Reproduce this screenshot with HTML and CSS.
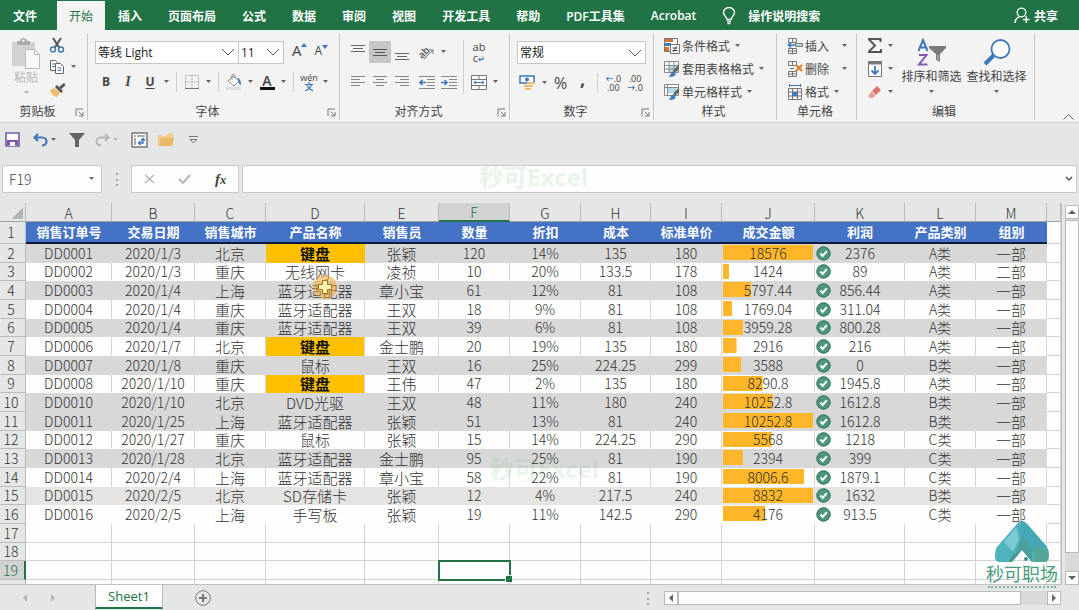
FILE: index.html
```
<!DOCTYPE html>
<html lang="zh-CN">

<head>
    <meta charset="UTF-8">
    <meta name="viewport" content="width=device-width, initial-scale=1.0">
    <title>Sheet1</title>
    <link rel="stylesheet" href="styles.css">
</head>

<body>
    <!-- shared symbols -->
    <svg class="symbols" aria-hidden="true">
        <symbol id="caret" viewBox="0 0 7 4"><path d="M1 0h5L3.5 3z" fill="currentColor" /></symbol>
        <symbol id="chevron" viewBox="0 0 14 8"><path d="M1 1l6 6 6-6" fill="none" stroke="#555" /></symbol>
        <symbol id="launcher" viewBox="0 0 9 9">
            <path d="M1 8V1h7M3.500 3.500l4 4M8 4v4H4" fill="none" stroke="#777" />
        </symbol>
        <symbol id="check" viewBox="0 0 15 15">
            <circle cx="7.500" cy="7.500" r="7.200" fill="#4f9580" />
            <circle cx="7.500" cy="7.500" r="6.500" fill="none" stroke="#397a66" />
            <path d="M4.500 7.500l2.200 2.400L10.800 5.200" fill="none" stroke="#fff" stroke-width="2" />
        </symbol>
    </svg>

    <div class="app">
        <nav class="tabs">
            <button class="tab file">文件</button>
            <button class="tab active">开始</button>
            <button class="tab">插入</button>
            <button class="tab">页面布局</button>
            <button class="tab">公式</button>
            <button class="tab">数据</button>
            <button class="tab">审阅</button>
            <button class="tab">视图</button>
            <button class="tab">开发工具</button>
            <button class="tab">帮助</button>
            <button class="tab">PDF工具集</button>
            <button class="tab">Acrobat</button>
            <button class="tab tell">
                <svg width="14" height="18" viewBox="0 0 14 18" fill="none" stroke="#fff" stroke-width="1.300">
                    <path d="M5 12.500c0-2.500-3.500-3.500-3.500-7a5.500 5 0 0 1 11 0c0 3.500-3.500 4.500-3.500 7zM5 14.500h4M5.500 16.500h3" />
                </svg>
                操作说明搜索
            </button>
            <button class="tab share">
                <svg width="16" height="17" viewBox="0 0 16 17" fill="none" stroke="#fff" stroke-width="1.300">
                    <circle cx="7.500" cy="5.500" r="4.300" />
                    <path d="M1 16c0-3.500 2-5.500 5-6.500M9 12.500h6.500M12.200 9v7" />
                </svg>
                共享
            </button>
        </nav>

        <div class="ribbon">
            <section class="group">
                <div class="group-body clipboard">
                    <button class="big disabled">
                        <svg width="30" height="31" viewBox="0 0 30 31">
                            <path d="M1 4h23v24H1z" fill="#d2d2d2" />
                            <path d="M6 3h3c0-4 7-4 7 0h3v4H6z" fill="#aaa" />
                            <circle cx="12.500" cy="2.800" r="1.300" fill="#f3f3f3" />
                            <path d="M14.500 11.500h9l5 5v14h-14z" fill="#f8f8f8" stroke="#bcbcbc" />
                            <path d="M23.500 11.500v5h5" fill="none" stroke="#bcbcbc" />
                        </svg>
                        <span>粘贴</span>
                        <svg class="caret"><use href="#caret" /></svg>
                    </button>
                    <div class="stack">
                        <button class="ib" aria-label="剪切">
                            <svg width="16" height="16" viewBox="0 0 16 16" fill="none">
                                <path d="M4 1l6.500 10M12 1L5.500 11" stroke="#555" stroke-width="2" />
                                <circle cx="4" cy="12.500" r="2.500" stroke="#3f77bb" stroke-width="1.400" />
                                <circle cx="12" cy="12.500" r="2.500" stroke="#3f77bb" stroke-width="1.400" />
                            </svg>
                        </button>
                        <div class="line">
                            <button class="ib" aria-label="复制">
                                <svg width="16" height="14" viewBox="0 0 16 14" fill="#fff" stroke="#666">
                                    <path d="M1.500.5h5l2 2v8h-7z" />
                                    <path d="M6.500 3.500h5l3 3v7h-8z" />
                                    <path d="M3 4h3M3 6.500h3M8.500 8h4M8.500 10.500h4" stroke="#3f77bb" />
                                </svg>
                            </button>
                            <svg class="caret"><use href="#caret" /></svg>
                        </div>
                        <button class="ib" aria-label="格式刷">
                            <svg width="17" height="15" viewBox="0 0 17 15">
                                <path d="M1 8l5-2 5 5-3 4c-3 0-6-3-7-7z" fill="#e9bd6d" />
                                <path d="M6 5l2-2 6 6-2 2z" fill="#555" />
                                <path d="M10 5l5-4 1.500 2-4 4z" fill="#555" />
                            </svg>
                        </button>
                    </div>
                </div>
                <footer class="group-label"><span>剪贴板</span><button aria-label="剪贴板设置"><svg class="launcher"><use href="#launcher" /></svg></button></footer>
            </section>

            <section class="group">
                <div class="group-body rows">
                    <div class="line">
                        <div class="combo font-name">
                            <select aria-label="字体"><option>等线 Light</option></select>
                            <svg class="chevron"><use href="#chevron" /></svg>
                        </div>
                        <div class="combo font-size">
                            <select aria-label="字号"><option>11</option></select>
                            <svg class="chevron"><use href="#chevron" /></svg>
                        </div>
                        <button class="ib grow">A<svg width="6" height="4" viewBox="0 0 6 4"><path d="M0 4h6L3 0z" fill="#3f77bb" /></svg></button>
                        <button class="ib shrink">A<svg width="6" height="4" viewBox="0 0 6 4"><path d="M0 0h6L3 4z" fill="#3f77bb" /></svg></button>
                    </div>
                    <div class="line">
                        <button class="ib bold">B</button>
                        <button class="ib italic">I</button>
                        <button class="ib underline">U</button>
                        <svg class="caret"><use href="#caret" /></svg>
                        <i class="vsep"></i>
                        <button class="ib" aria-label="边框">
                            <svg width="14" height="14" viewBox="0 0 14 14" fill="none" stroke="#aaa">
                                <path d="M.5.5h13v13H.5zM7 0v14M0 7h14" stroke-dasharray="2 1" />
                                <path d="M0 13.500h14" stroke="#777" />
                            </svg>
                        </button>
                        <svg class="caret"><use href="#caret" /></svg>
                        <i class="vsep"></i>
                        <button class="ib" aria-label="填充颜色">
                            <svg width="17" height="16" viewBox="0 0 17 16">
                                <path d="M0 13h15v3H0z" fill="#ddd" />
                                <path d="M2 7l5-5 6 5-5 5z" fill="#fff" stroke="#888" />
                                <path d="M6 6V1.500c0-1.500 3-1.500 3 0V4" fill="none" stroke="#888" />
                                <path d="M11 4c3 0 4 3 4 7-2-1-3-2-2-4z" fill="#3f77bb" />
                            </svg>
                        </button>
                        <svg class="caret"><use href="#caret" /></svg>
                        <button class="ib font-color"><span>A</span></button>
                        <svg class="caret"><use href="#caret" /></svg>
                        <i class="vsep"></i>
                        <button class="ib phonetic"><span>wén</span><b>文</b></button>
                        <svg class="caret"><use href="#caret" /></svg>
                    </div>
                </div>
                <footer class="group-label"><span>字体</span><button aria-label="字体设置"><svg class="launcher"><use href="#launcher" /></svg></button></footer>
            </section>

            <section class="group">
                <div class="group-body align">
                    <div class="rows">
                        <div class="line">
                            <button class="ib" aria-label="顶端对齐"><svg width="14" height="18" viewBox="0 0 14 18" stroke="#666"><path d="M0 2.500h14M2 5.500h10M0 8.500h14" /></svg></button>
                            <button class="ib pressed" aria-label="垂直居中"><svg width="14" height="18" viewBox="0 0 14 18" stroke="#555"><path d="M0 6.500h14M2 9.500h10M0 12.500h14" /></svg></button>
                            <button class="ib" aria-label="底端对齐"><svg width="14" height="18" viewBox="0 0 14 18" stroke="#666"><path d="M0 10.500h14M2 13.500h10M0 16.500h14" /></svg></button>
                            <button class="ib gap-left" aria-label="方向">
                                <svg width="18" height="17" viewBox="0 0 18 17" overflow="visible">
                                    <text x="0" y="12" class="icon-ab" transform="rotate(-45 6 9)">ab</text>
                                    <path d="M6 15L15 6M11 6h4v4" fill="none" stroke="#777" />
                                </svg>
                            </button>
                            <svg class="caret"><use href="#caret" /></svg>
                        </div>
                        <div class="line">
                            <button class="ib" aria-label="左对齐"><svg width="14" height="12" viewBox="0 0 14 12" stroke="#888"><path d="M0 .5h14M0 3.500h9M0 6.500h14M0 9.500h9" /></svg></button>
                            <button class="ib" aria-label="居中"><svg width="14" height="12" viewBox="0 0 14 12" stroke="#888"><path d="M0 .5h14M3 3.500h8M0 6.500h14M3 9.500h8" /></svg></button>
                            <button class="ib" aria-label="右对齐"><svg width="14" height="12" viewBox="0 0 14 12" stroke="#888"><path d="M0 .5h14M5 3.500h9M0 6.500h14M5 9.500h9" /></svg></button>
                            <button class="ib gap-left" aria-label="减少缩进">
                                <svg width="16" height="13" viewBox="0 0 16 13" stroke="#888" fill="none">
                                    <path d="M0 .5h16M8 3.500h8M8 6.500h8M8 9.500h8M0 12.500h16" />
                                    <path d="M7 6.500H1M3.500 4L1 6.500 3.500 9" stroke="#3f77bb" stroke-width="1.600" />
                                </svg>
                            </button>
                            <button class="ib" aria-label="增加缩进">
                                <svg width="16" height="13" viewBox="0 0 16 13" stroke="#888" fill="none">
                                    <path d="M0 .5h16M8 3.500h8M8 6.500h8M8 9.500h8M0 12.500h16" />
                                    <path d="M0 6.500h6M3.500 4L6 6.500 3.500 9" stroke="#3f77bb" stroke-width="1.600" />
                                </svg>
                            </button>
                        </div>
                    </div>
                    <i class="vsep tall"></i>
                    <div class="rows">
                        <button class="ib wrap"><span>ab</span><span>c<em>↵</em></span></button>
                        <div class="line">
                            <button class="ib" aria-label="合并后居中">
                                <svg width="16" height="15" viewBox="0 0 16 15" fill="#fff" stroke="#777">
                                    <path d="M.5.5h15v14H.5zM0 4.500h16M0 10.500h16M8 0v4M8 11v4" />
                                    <path d="M3 7.500h10M5 6L3 7.500 5 9M11 6l2 1.500L11 9" stroke="#3f77bb" fill="none" />
                                </svg>
                            </button>
                            <svg class="caret"><use href="#caret" /></svg>
                        </div>
                    </div>
                </div>
                <footer class="group-label"><span>对齐方式</span><button aria-label="对齐设置"><svg class="launcher"><use href="#launcher" /></svg></button></footer>
            </section>

            <section class="group">
                <div class="group-body rows">
                    <div class="combo">
                        <select aria-label="数字格式"><option>常规</option></select>
                        <svg class="chevron"><use href="#chevron" /></svg>
                    </div>
                    <div class="line">
                        <button class="ib" aria-label="会计数字格式">
                            <svg width="17" height="16" viewBox="0 0 17 16">
                                <path d="M1 1h14v7H1z" fill="#fff" stroke="#3f77bb" stroke-width="1.500" />
                                <circle cx="8" cy="4.500" r="2" fill="#3f77bb" />
                                <path d="M8 7h8v2H8zM5 10h9v2H5zM6 13h6v2H6z" fill="#e9bd6d" />
                            </svg>
                        </button>
                        <svg class="caret"><use href="#caret" /></svg>
                        <button class="ib percent">%</button>
                        <button class="ib comma">,</button>
                        <i class="vsep"></i>
                        <button class="ib decimal"><span><em>←</em>.0</span><span>.00</span></button>
                        <button class="ib decimal"><span>.00</span><span><em>→</em>.0</span></button>
                    </div>
                </div>
                <footer class="group-label"><span>数字</span><button aria-label="数字设置"><svg class="launcher"><use href="#launcher" /></svg></button></footer>
            </section>

            <section class="group">
                <div class="group-body list">
                    <button class="item">
                        <svg width="16" height="16" viewBox="0 0 16 16">
                            <path d="M.5.5h13v13H.5z" fill="#fff" stroke="#777" />
                            <path d="M1 1h8v3H1z" fill="#d9703a" /><path d="M1 5h6v3H1z" fill="#3f77bb" /><path d="M1 9h4v4H1z" fill="#d9703a" />
                            <path d="M6.500 6.500h9v9h-9z" fill="#fff" stroke="#777" />
                            <path d="M8.500 10h5M8.500 12.500h5M12.500 8.500l-3 5.500" stroke="#444" />
                        </svg>
                        条件格式<svg class="caret"><use href="#caret" /></svg>
                    </button>
                    <button class="item">
                        <svg width="16" height="16" viewBox="0 0 16 16">
                            <path d="M.5.5h14v11H.5z" fill="#fff" stroke="#888" />
                            <path d="M5 5h9v6H5z" fill="#b5dbe6" /><path d="M0 4.500h15M0 8h15M5 0v12M10 0v12" stroke="#888" />
                            <path d="M15 3v5l-4 4-2-2z" fill="#666" /><path d="M4 15.500c3 0 2-4 5-5l3 3c-2 2.500-5 2.500-8 2z" fill="#3f77bb" />
                        </svg>
                        套用表格格式<svg class="caret"><use href="#caret" /></svg>
                    </button>
                    <button class="item">
                        <svg width="16" height="16" viewBox="0 0 16 16">
                            <path d="M.5.5h14v11H.5z" fill="#fff" stroke="#888" />
                            <path d="M4 4h8v5H4z" fill="#b5dbe6" /><path d="M0 3.500h15M3.500 0v12" stroke="#888" />
                            <path d="M15 3v5l-4 4-2-2z" fill="#666" /><path d="M4 15.500c3 0 2-4 5-5l3 3c-2 2.500-5 2.500-8 2z" fill="#3f77bb" />
                        </svg>
                        单元格样式<svg class="caret"><use href="#caret" /></svg>
                    </button>
                </div>
                <footer class="group-label"><span>样式</span></footer>
            </section>

            <section class="group">
                <div class="group-body list">
                    <button class="item spread">
                        <svg width="16" height="16" viewBox="0 0 16 16" fill="none" stroke="#777">
                            <path d="M1.500.5h8v4h-8zM5.500.5v4M1.500 10.500h8v5h-8zM5.500 10v6M1.500 13h8" />
                            <path d="M8.500 5.500h7v3h-7z" fill="#b5dbe6" />
                            <path d="M8 7H1M4 4.500L1.500 7 4 9.500" stroke="#3f77bb" stroke-width="1.700" />
                        </svg>
                        插入<svg class="caret"><use href="#caret" /></svg>
                    </button>
                    <button class="item spread">
                        <svg width="16" height="16" viewBox="0 0 16 16" fill="none" stroke="#777">
                            <path d="M1.500.5h8v4h-8zM5.500.5v4M1.500 10.500h8v5h-8zM5.500 10v6M1.500 13h8M3 7.500h4" />
                            <path d="M9 4l6 6M15 4l-6 6" stroke="#e07b28" stroke-width="2" />
                        </svg>
                        删除<svg class="caret"><use href="#caret" /></svg>
                    </button>
                    <button class="item">
                        <svg width="16" height="16" viewBox="0 0 16 16" fill="none" stroke="#777">
                            <path d="M1.500 4.500h13v11h-13zM5.500 4v12M10.500 4v12M1 8h14M1 12h14" />
                            <path d="M5 8h5v4H5z" fill="#3f77bb" stroke="none" />
                            <path d="M2 1.500h11M2.500 0v3M13.500 0v3" stroke="#3f77bb" />
                        </svg>
                        格式<svg class="caret"><use href="#caret" /></svg>
                    </button>
                </div>
                <footer class="group-label"><span>单元格</span></footer>
            </section>

            <section class="group">
                <div class="group-body edit">
                    <div class="list">
                        <button class="item" aria-label="自动求和">
                            <svg width="16" height="15" viewBox="0 0 16 15"><path d="M1 1h12.500v3M1.500 1l6.500 6.500L1.500 14M1 14h13v-3" fill="none" stroke="#555" stroke-width="2" /></svg>
                            <svg class="caret"><use href="#caret" /></svg>
                        </button>
                        <button class="item" aria-label="填充">
                            <svg width="16" height="16" viewBox="0 0 16 16" fill="#fff" stroke="#777">
                                <path d="M1.500.5h13v15h-13z" /><path d="M1 2h14" stroke-width="3" />
                                <path d="M8 5v8M4.500 9.500L8 13l3.500-3.500" fill="none" stroke="#3f77bb" stroke-width="1.800" />
                            </svg>
                            <svg class="caret"><use href="#caret" /></svg>
                        </button>
                        <button class="item" aria-label="清除">
                            <svg width="16" height="14" viewBox="0 0 16 14"><path d="M5 6l5-5 4 4-5 5z" fill="#dd7368" /><path d="M4.500 6.500l4 4-2.500 2.500H3l-2-2z" fill="#e9a098" /></svg>
                            <svg class="caret"><use href="#caret" /></svg>
                        </button>
                    </div>
                    <button class="big">
                        <svg width="30" height="30" viewBox="0 0 30 30">
                            <path d="M1.500 13L6 2l4.500 11M3 9.500h6" fill="none" stroke="#3f77bb" stroke-width="2" />
                            <path d="M2 17h7.500L2 26.500h8.500" fill="none" stroke="#8057b0" stroke-width="2" />
                            <path d="M12 8h17v2l-6 6v8l-4-2v-6l-7-6z" fill="#7b7b7b" /><path d="M21 17v5" stroke="#ccc" />
                        </svg>
                        <span>排序和筛选</span>
                        <svg class="caret"><use href="#caret" /></svg>
                    </button>
                    <button class="big">
                        <svg width="28" height="30" viewBox="0 0 28 30" fill="none" stroke="#3f77bb">
                            <path d="M11 17L2 26" stroke-width="4" /><circle cx="17.500" cy="11" r="9" stroke-width="1.800" fill="#fff" />
                        </svg>
                        <span>查找和选择</span>
                        <svg class="caret"><use href="#caret" /></svg>
                    </button>
                </div>
                <footer class="group-label"><span>编辑</span></footer>
            </section>
            <button class="collapse" aria-label="折叠功能区"><svg width="11" height="6" viewBox="0 0 11 6"><path d="M.5 5.500l5-5 5 5" fill="none" stroke="#666" /></svg></button>
        </div>

        <div class="quick">
            <button aria-label="保存">
                <svg width="15" height="15" viewBox="0 0 15 15" fill="none" stroke="#7a57a8" stroke-width="1.600"><path d="M1 1h13v13H1z" fill="#fff" /><path d="M2 8h11v5H2z" fill="#7a57a8" stroke="none" /><path d="M5 10h5v4H5z" fill="#fff" stroke="none" /></svg>
            </button>
            <button aria-label="撤销">
                <svg width="15" height="14" viewBox="0 0 15 14" fill="none" stroke="#3f77bb" stroke-width="2.200"><path d="M5 1L1.500 4.500 5 8M2 4.500h7c6 0 6 8 0 8" /></svg>
                <svg class="caret"><use href="#caret" /></svg>
            </button>
            <button aria-label="筛选"><svg width="16" height="14" viewBox="0 0 16 14"><path d="M0 0h16l-6 7v7H6V7z" fill="#636363" /></svg></button>
            <button class="disabled" aria-label="恢复">
                <svg width="15" height="14" viewBox="0 0 15 14" fill="none" stroke="#b5b5b5" stroke-width="2"><path d="M10 1l3.500 3.500L10 8M13 4.500H6c-6 0-6 8 0 8" /></svg>
                <svg class="caret"><use href="#caret" /></svg>
            </button>
            <button aria-label="数据透视表">
                <svg width="17" height="16" viewBox="0 0 17 16" fill="none"><path d="M1 1h15v14H1z" fill="#fff" stroke="#777" stroke-width="1.500" /><path d="M3 3h2v2H3zM6 3h8v2H6zM3 6h2v7H3z" fill="#aaa" /><path d="M8 11h4V7M10 8.500L12 6.500l2 2M9.500 9L7.500 11l2 2" stroke="#3f77bb" stroke-width="1.400" /></svg>
            </button>
            <button aria-label="打开">
                <svg width="16" height="13" viewBox="0 0 16 13"><path d="M0 2h4l1 1h3l3-3h4v13H0z" fill="#f0cd91" /><path d="M3 5h13l-2 8H1z" fill="#e8b967" /></svg>
            </button>
            <button aria-label="自定义快速访问工具栏"><svg width="9" height="8" viewBox="0 0 9 8" fill="none" stroke="#777"><path d="M0 .5h9M1 3.500h7L4.500 7z" /></svg></button>
        </div>

        <div class="formula-bar">
            <div class="name-box"><input aria-label="名称框" value="F19"><svg class="caret"><use href="#caret" /></svg></div>
            <span class="dots">⋮</span>
            <div class="fx">
                <button aria-label="取消"><svg width="11" height="10" viewBox="0 0 11 10"><path d="M1 1l9 8M10 1L1 9" stroke="#b8b8b8" stroke-width="1.600" /></svg></button>
                <button aria-label="输入"><svg width="13" height="10" viewBox="0 0 13 10"><path d="M1 5l4 4 7-8" fill="none" stroke="#b8b8b8" stroke-width="2" /></svg></button>
                <button class="fx-label">f<small>x</small></button>
            </div>
            <div class="formula"><input aria-label="编辑栏"><svg width="8" height="6" viewBox="0 0 8 6"><path d="M1 1l3 3 3-3" fill="none" stroke="#555" stroke-width="1.500" /></svg></div>
        </div>

        <main class="sheet">
            <div class="grid-area">
                <table class="grid">
                    <colgroup>
                        <col class="w-row"><col class="w-a"><col class="w-b"><col class="w-s"><col class="w-d"><col class="w-e"><col class="w-s">
                        <col class="w-s"><col class="w-h"><col class="w-s"><col class="w-j"><col class="w-k"><col class="w-s"><col class="w-s"><col>
                    </colgroup>
                    <thead id="letters"></thead>
                    <tbody id="cells"></tbody>
                </table>
            </div>
            <div class="vscroll">
                <button aria-label="向上"><i class="arrow up"></i></button>
                <div class="thumb"></div>
                <div class="track"></div>
                <button aria-label="向下"><i class="arrow down"></i></button>
            </div>
        </main>

        <footer class="sheet-bar">
            <div class="sheet-nav"><i class="arrow left"></i><i class="arrow right"></i></div>
            <button class="sheet-tab">Sheet1</button>
            <button class="add" aria-label="新工作表"><svg width="16" height="16" viewBox="0 0 16 16" fill="none" stroke="#777"><circle cx="8" cy="8" r="7.300" /><path d="M8 4v8M4 8h8" stroke-width="2" /></svg></button>
            <span class="dots">⋮</span>
            <div class="hscroll">
                <button aria-label="向左"><i class="arrow left"></i></button>
                <div class="thumb"></div>
                <div class="track"></div>
                <button aria-label="向右"><i class="arrow right"></i></button>
            </div>
        </footer>

        <div class="watermark top">秒可Excel</div>
        <div class="watermark low">秒可Excel</div>
        <svg class="cursor" width="26" height="26" viewBox="0 0 26 26">
            <circle cx="13" cy="13" r="12" fill="#f5a623" fill-opacity=".5" />
            <path d="M10.500 6.500h5v4h4v5h-4v4h-5v-4h-4v-5h4z" fill="#fff6b0" stroke="#9a7420" />
        </svg>
        <div class="brand">
            <svg width="56" height="42" viewBox="0 0 56 42">
                <path d="M28 0c2 0 4 2 6 4l19 22c2 3 2 6 2 10 0 3-2 5-5 5H38L28 29 18 41H6c-3 0-5-2-5-5 0-4 0-7 2-10L22 4c2-2 4-4 6-4z" fill="#4fb3bd" />
                <path d="M28 0c2 0 4 2 6 4l19 22-14 6-11-13-3-9z" fill="#46a8b6" />
                <path d="M22 6l3 12-6 13-9-10z" fill="#7ccad2" />
                <path d="M28 14l10 15v12l-10-12-8 9z" fill="#4a9f98" />
                <path d="M14 41l6-9 4 2-6 7z" fill="#4a9b8e" />
                <path d="M42 24l12 6v6c0 3-2 5-5 5h-9z" fill="#55a694" />
                <circle cx="32" cy="38" r="2" fill="#3d8f7d" />
            </svg>
            <span>秒可职场</span>
            <i></i>
        </div>
    </div>

    <script>
        const titles = ['销售订单号', '交易日期', '销售城市', '产品名称', '销售员', '数量', '折扣', '成本', '标准单价', '成交金额', '利润', '产品类别', '组别'];

        // last value of each row is the length of the data bar
        const orders = [
            ['DD0001', '2020/1/3', '北京', '键盘', '张颖', '120', '14%', '135', '180', '18576', '2376', 'A类', '一部', 1],
            ['DD0002', '2020/1/3', '重庆', '无线网卡', '凌祯', '10', '20%', '133.5', '178', '1424', '89', 'A类', '二部', 0.07],
            ['DD0003', '2020/1/4', '上海', '蓝牙适配器', '章小宝', '61', '12%', '81', '108', '5797.44', '856.44', 'A类', '一部', 0.31],
            ['DD0004', '2020/1/4', '重庆', '蓝牙适配器', '王双', '18', '9%', '81', '108', '1769.04', '311.04', 'A类', '一部', 0.1],
            ['DD0005', '2020/1/4', '重庆', '蓝牙适配器', '王双', '39', '6%', '81', '108', '3959.28', '800.28', 'A类', '一部', 0.22],
            ['DD0006', '2020/1/7', '北京', '键盘', '金士鹏', '20', '19%', '135', '180', '2916', '216', 'A类', '一部', 0.15],
            ['DD0007', '2020/1/8', '重庆', '鼠标', '王双', '16', '25%', '224.25', '299', '3588', '0', 'B类', '一部', 0.2],
            ['DD0008', '2020/1/10', '重庆', '键盘', '王伟', '47', '2%', '135', '180', '8290.8', '1945.8', 'A类', '一部', 0.44],
            ['DD0010', '2020/1/10', '北京', 'DVD光驱', '王双', '48', '11%', '180', '240', '10252.8', '1612.8', 'B类', '一部', 0.55],
            ['DD0011', '2020/1/25', '上海', '蓝牙适配器', '张颖', '51', '13%', '81', '240', '10252.8', '1612.8', 'B类', '一部', 1],
            ['DD0012', '2020/1/27', '重庆', '鼠标', '张颖', '15', '14%', '224.25', '290', '5568', '1218', 'C类', '一部', 0.54],
            ['DD0013', '2020/1/28', '北京', '蓝牙适配器', '金士鹏', '95', '25%', '81', '190', '2394', '399', 'C类', '一部', 0.22],
            ['DD0014', '2020/2/4', '上海', '蓝牙适配器', '章小宝', '58', '22%', '81', '190', '8006.6', '1879.1', 'C类', '一部', 0.9],
            ['DD0015', '2020/2/5', '北京', 'SD存储卡', '张颖', '12', '4%', '217.5', '240', '8832', '1632', 'B类', '一部', 1],
            ['DD0016', '2020/2/5', '上海', '手写板', '张颖', '19', '11%', '142.5', '290', '4176', '913.5', 'C类', '一部', 0.47]
        ];
        const shaded = [2, 4, 6, 8, 10, 11, 13];

        const letters = 'ABCDEFGHIJKLM'.split('').map(l => `<th${l === 'F' ? ' class="current"' : ''}>${l}</th>`).join('');
        document.getElementById('letters').innerHTML = `<tr><th class="corner"><i></i></th>${letters}<th></th></tr>`;

        function cell(value, col, bar) {
            if (col === 3 && value === '键盘') return `<td class="hot">${value}</td>`;
            if (col === 9) return `<td class="bar" style="--share: ${bar}">${value}</td>`;
            if (col === 10) return `<td><div class="flag"><svg><use href="#check" /></svg><span>${value}</span></div></td>`;
            return `<td>${value}</td>`;
        }

        let html = `<tr class="titles"><th>1</th>${titles.map(t => `<td>${t}</td>`).join('')}<td class="rest"></td></tr>`;
        orders.forEach((order, i) => {
            const n = i + 2;
            let cls = 'data';
            if (shaded.includes(n)) cls += ' shaded';
            if (n === 15) cls += ' light';
            if (n === 16) cls += ' plain';
            const tds = order.slice(0, 13).map((v, c) => cell(v, c, order[13])).join('');
            html += `<tr class="${cls}"><th>${n}</th>${tds}<td class="rest"></td></tr>`;
        });
        for (let n = 17; n <= 20; n++) {
            let tds = '';
            for (let c = 0; c < 14; c++) {
                tds += n === 19 && c === 5 ? '<td class="selected"></td>' : '<td></td>';
            }
            html += `<tr><th${n === 19 ? ' class="current"' : ''}>${n < 20 ? n : ''}</th>${tds}</tr>`;
        }
        document.getElementById('cells').innerHTML = html;
    </script>
</body>

</html>
```
FILE: styles.css
```
* {
    box-sizing: border-box;
}

body {
    margin: 0;
    font-family: "Open Sans", "Noto Sans CJK SC", sans-serif;
    font-size: 12px;
    color: #444;
}

button,
input,
select {
    font: inherit;
    color: inherit;
    margin: 0;
    padding: 0;
    border: 0;
    background: none;
    outline: 0;
}

svg {
    flex: none;
}

.symbols {
    display: none;
}

.app {
    position: relative;
    display: flex;
    flex-direction: column;
    height: 100vh;
    overflow: hidden;
    background: #e5e7e6;
}

/* ribbon tabs */
.tabs {
    display: flex;
    height: 30px;
    padding-top: 1px;
    background: #217346;
    color: #fff;
}

.tab {
    display: flex;
    align-items: center;
    padding: 0 13px;
    font-weight: 600;
    white-space: nowrap;
}

.tab.file {
    margin-right: 7px;
}

.tab.active {
    padding: 0 12px;
    background: #f3f3f3;
    color: #217346;
    font-weight: 400;
}

.tell {
    gap: 12px;
}

.share {
    gap: 4px;
    margin-left: auto;
    padding-right: 21px;
}

/* ribbon */
.ribbon {
    display: grid;
    grid-template-columns: 88px 252px 170px 144px 123px 80px 178px 1fr;
    height: 93px;
    padding: 4px 0 2px;
    background: #f3f3f3;
    border-bottom: 1px solid #d2d2d2;
}

.group {
    display: flex;
    flex-direction: column;
    border-right: 1px solid #c3c8c6;
}

.group-body {
    flex: 1;
    padding: 0 7px;
}

.group-label {
    display: flex;
    align-items: center;
    height: 16px;
    padding-right: 3px;
}

.group-label span {
    flex: 1;
    text-align: center;
    line-height: 16px;
}

.group-label button {
    display: flex;
}

.launcher {
    width: 9px;
    height: 9px;
}

.caret {
    width: 7px;
    height: 4px;
    margin: 0 2px;
    color: #666;
}

.chevron {
    width: 14px;
    height: 8px;
    margin-right: 3px;
    pointer-events: none;
}

.clipboard,
.align,
.edit {
    display: flex;
}

.clipboard {
    padding: 0 8px 0 6px;
}

.stack,
.list {
    display: flex;
    flex-direction: column;
}

.rows {
    display: flex;
    flex-direction: column;
    gap: 8px;
    padding-top: 7px;
}

.align {
    padding-top: 0;
}

.line {
    display: flex;
    align-items: center;
    height: 22px;
}

.ib {
    display: flex;
    align-items: center;
    justify-content: center;
    width: 22px;
    height: 22px;
    line-height: 1;
}

.pressed {
    background: #c6c6c6;
}

.gap-left {
    margin-left: 3px;
}

.vsep {
    width: 1px;
    height: 20px;
    margin: 0 4px;
    background: #d0d0d0;
}

.vsep.tall {
    height: 54px;
    margin: 6px 4px 0 3px;
}

.big {
    display: flex;
    flex-direction: column;
    align-items: center;
    width: 65px;
    padding-top: 4px;
}

.big span {
    line-height: 18px;
    white-space: nowrap;
}

.big .caret {
    margin-top: 4px;
}

.clipboard .big {
    width: 40px;
}

.clipboard .big span,
.disabled .caret {
    color: #b5b5b5;
}

.combo {
    display: flex;
    align-items: center;
    height: 23px;
    border: 1px solid #c3c8c6;
    background: #fff;
    color: #222;
}

.combo select {
    flex: 1;
    min-width: 0;
    padding-left: 2px;
    appearance: none;
}

.font-name {
    width: 147px;
}

.font-size {
    width: 47px;
    margin-left: -1px;
    margin-right: 5px;
}

.grow,
.shrink {
    align-items: flex-start;
    padding-top: 2px;
}

.grow {
    font-size: 15px;
}

.shrink {
    padding-top: 4px;
    font-size: 12px;
}

.bold {
    font-weight: 700;
}

.italic {
    font-family: "Liberation Serif", serif;
    font-size: 14px;
    font-style: italic;
    font-weight: 700;
}

.underline {
    font-weight: 700;
    text-decoration: underline;
    text-underline-offset: 2px;
}

.font-color span {
    width: 15px;
    font-size: 14px;
    font-weight: 600;
    line-height: 13px;
    border-bottom: 3px solid #111;
}

.phonetic,
.wrap,
.decimal {
    flex-direction: column;
}

.phonetic {
    font-size: 9px;
}

.phonetic span {
    line-height: 9px;
}

.phonetic b {
    color: #3f77bb;
    line-height: 10px;
}

.wrap {
    font-size: 11px;
    line-height: 11px;
}

.wrap em,
.decimal em {
    font-style: normal;
    font-size: 8px;
    font-weight: 700;
    color: #3f77bb;
}

.icon-ab {
    font-size: 10px;
    font-weight: 600;
    fill: #555;
}

.percent {
    font-size: 16px;
}

.comma {
    font-size: 18px;
    font-weight: 700;
    padding-bottom: 9px;
}

.decimal {
    font-size: 9px;
    line-height: 9px;
}

.list {
    padding: 0 0 0 10px;
}

.item {
    display: flex;
    align-items: center;
    gap: 2px;
    height: 23px;
    white-space: nowrap;
}

.spread .caret {
    margin-left: 10px;
}

.edit {
    padding: 0;
}

.edit .list {
    margin-right: 3px;
}

.collapse {
    align-self: end;
    justify-self: end;
    padding-right: 5px;
    line-height: 8px;
}

/* quick access toolbar */
.quick {
    display: flex;
    align-items: center;
    gap: 10px;
    height: 33px;
    padding-left: 5px;
}

.quick button {
    display: flex;
    align-items: center;
}

.quick button:first-child {
    margin-right: 3px;
}

.quick button:last-child {
    margin-left: 5px;
}

/* formula bar */
.formula-bar {
    display: flex;
    gap: 3px;
    height: 28px;
    margin: 9px 2px 10px;
}

.name-box,
.fx,
.formula {
    display: flex;
    align-items: center;
    border: 1px solid #cacaca;
    background: #fdfdfd;
}

.name-box {
    width: 100px;
    padding: 0 4px 0 6px;
    font-family: "Noto Sans CJK SC", sans-serif;
    font-weight: 300;
    font-size: 14px;
}

.name-box input,
.formula input {
    flex: 1;
    min-width: 0;
}

.dots {
    width: 23px;
    text-align: center;
    line-height: 28px;
    font-size: 16px;
    color: #999;
}

.fx {
    justify-content: space-around;
    width: 108px;
}

.fx-label {
    font-family: "Liberation Serif", serif;
    font-size: 15px;
    font-style: italic;
    font-weight: 700;
}

.formula {
    flex: 1;
    padding-right: 3px;
}

/* sheet */
.sheet {
    display: flex;
    flex: 1;
    min-height: 0;
}

.grid-area {
    flex: 1;
    overflow: hidden;
    background: #fefefe;
    border-right: 1px solid #bfc1c0;
    border-bottom: 1px solid #bfc1c0;
}

.grid {
    width: 100%;
    table-layout: fixed;
    border-collapse: separate;
    border-spacing: 0;
    font-family: "Noto Sans CJK SC", sans-serif;
    font-weight: 300;
    font-size: 14px;
    color: #333;
}

.w-row { width: 26px; }
.w-a { width: 86px; }
.w-b { width: 83px; }
.w-s { width: 71px; }
.w-d { width: 99px; }
.w-e { width: 74px; }
.w-h { width: 70px; }
.w-j { width: 93px; }
.w-k { width: 90px; }

.grid th,
.grid td {
    height: 19px;
    padding: 0;
    line-height: 17px;
    text-align: center;
    white-space: nowrap;
    border-right: 1px solid #d4d4d4;
    border-bottom: 1px solid #d4d4d4;
}

.grid tbody tr:nth-child(3n) > * {
    height: 18px;
}

.grid th {
    font-weight: 300;
    background: #e5e7e6;
    border-color: #b9bbba;
}

.grid thead th {
    padding-top: 2px;
    line-height: 15px;
    border-bottom-color: #9fa3a1;
}

.grid tbody th {
    padding-right: 3px;
}

.corner i {
    display: block;
    width: 11px;
    height: 11px;
    margin-left: auto;
    margin-right: 2px;
    background: linear-gradient(135deg, transparent 50%, #b3b5b4 50%);
}

.grid .current {
    background: #d2d2d2;
    color: #217346;
}

.grid thead .current {
    border-bottom: 2px solid #217346;
}

.grid tbody .current {
    border-right: 2px solid #217346;
}

.grid .titles > * {
    height: 22px;
}

.grid .titles td:not(.rest) {
    padding-bottom: 2px;
    background: #4472c4;
    color: #fff;
    font-size: 13px;
    font-weight: 700;
    border-right: 0;
    border-bottom: 2px solid #0b1a3a;
}

.data td:nth-child(4),
.data td:nth-child(5),
.data td:nth-child(6),
.data td:nth-child(14) {
    font-size: 15px;
}

.data td:not(.rest) {
    border-bottom-color: transparent;
}

.shaded td:not(.rest) {
    background-color: #d8d8d8;
    border-right-color: transparent;
}

.light td:not(.rest) {
    background-color: #e5e4e3;
    border-right-color: transparent;
}

.plain td:not(.rest) {
    border-right-color: transparent;
}

.grid .data .hot {
    background: #ffc000;
    color: #111;
    font-weight: 700;
}

.bar {
    background-image: linear-gradient(#ffb628, #ffb628);
    background-repeat: no-repeat;
    background-position: 1px 1px;
    background-size: calc((100% - 2px) * var(--share)) 15px;
}

.flag {
    display: flex;
    align-items: center;
    height: 17px;
    padding-left: 1px;
}

.flag svg {
    width: 15px;
    height: 15px;
}

.flag span {
    flex: 1;
    padding-right: 15px;
}

.selected {
    position: relative;
    outline: 2px solid #217346;
    outline-offset: -1px;
}

.selected::after {
    content: "";
    position: absolute;
    right: -3px;
    bottom: -3px;
    width: 6px;
    height: 6px;
    background: #217346;
    border: 1px solid #fff;
    border-width: 1px 0 0 1px;
}

/* scroll bars */
.vscroll,
.hscroll {
    display: flex;
    background: #dadada;
}

.vscroll {
    flex-direction: column;
    width: 14px;
    margin: 2px 0 0 3px;
}

.vscroll button,
.hscroll button {
    display: flex;
    align-items: center;
    justify-content: center;
    width: 14px;
    height: 14px;
    border: 1px solid #b9bbba;
    background: #fdfdfd;
}

.thumb {
    border: 1px solid #b9bbba;
    background: #fdfdfd;
}

.vscroll .thumb {
    flex: 18;
    margin-top: 1px;
}

.vscroll .track {
    flex: 1;
}

.hscroll .thumb {
    flex: 13;
}

.hscroll .track {
    flex: 1;
}

.arrow {
    border: 4px solid transparent;
    color: #666;
}

.arrow.up { border-top: 0; border-bottom-color: currentColor; }
.arrow.down { border-bottom: 0; border-top-color: currentColor; }
.arrow.left { border-left: 0; border-right-color: currentColor; }
.arrow.right { border-right: 0; border-left-color: currentColor; }

/* sheet tabs */
.sheet-bar {
    display: flex;
    align-items: center;
    height: 25px;
}

.sheet-nav {
    display: flex;
    gap: 24px;
    width: 95px;
    padding-left: 23px;
}

.sheet-nav .arrow {
    color: #b5b5b5;
}

.sheet-tab {
    align-self: flex-start;
    width: 68px;
    height: 24px;
    background: #fefefe;
    border: 1px solid #b9bbba;
    border-width: 0 1px;
    border-bottom: 2px solid #217346;
    color: #217346;
    font-size: 13px;
}

.add {
    display: flex;
    margin-left: 32px;
}

.sheet-bar .dots {
    margin-left: auto;
    line-height: 24px;
}

.hscroll {
    width: 397px;
    margin: 0 18px 0 5px;
}

/* overlays */
.watermark {
    position: absolute;
    font-size: 24px;
    font-weight: 700;
    line-height: 24px;
    color: rgba(90, 180, 100, 0.14);
    pointer-events: none;
}

.watermark.top {
    left: 479px;
    top: 165px;
}

.watermark.low {
    left: 490px;
    top: 457px;
}

.cursor {
    position: absolute;
    left: 312px;
    top: 274px;
}

.brand {
    position: absolute;
    right: 21px;
    bottom: 22px;
    display: flex;
    flex-direction: column;
    align-items: center;
    color: #4a9b7f;
    font-size: 18px;
    line-height: 23px;
}

.brand i {
    width: 68px;
    border-top: 2px dotted #7fb3a0;
}
```
